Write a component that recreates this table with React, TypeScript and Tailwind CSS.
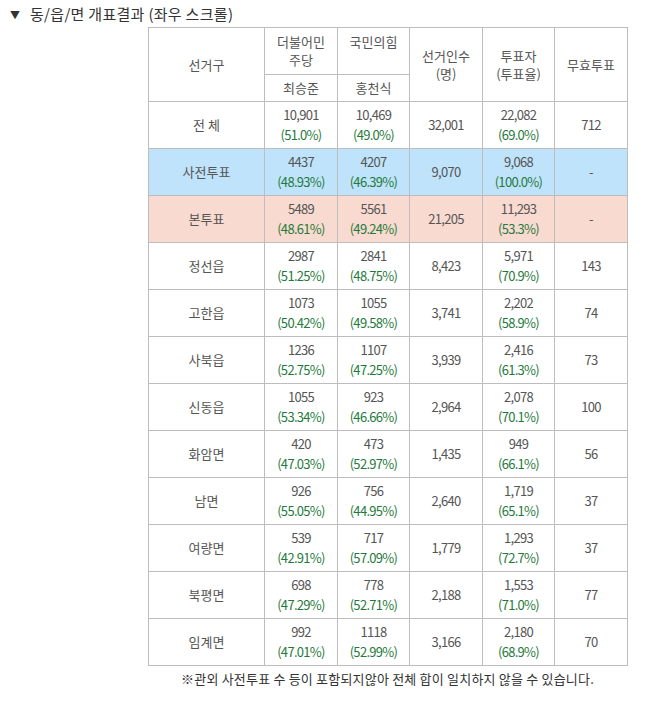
import React from 'react';

interface Row {
  name: string;
  a: string;
  ap: string;
  b: string;
  bp: string;
  voters: string;
  turnout: string;
  tp: string;
  invalid: string;
  bg?: string;
}

const rows: Row[] = [
  { name: '전 체', a: '10,901', ap: '(51.0%)', b: '10,469', bp: '(49.0%)', voters: '32,001', turnout: '22,082', tp: '(69.0%)', invalid: '712' },
  { name: '사전투표', a: '4437', ap: '(48.93%)', b: '4207', bp: '(46.39%)', voters: '9,070', turnout: '9,068', tp: '(100.0%)', invalid: '-', bg: 'bg-[#bfe3fb]' },
  { name: '본투표', a: '5489', ap: '(48.61%)', b: '5561', bp: '(49.24%)', voters: '21,205', turnout: '11,293', tp: '(53.3%)', invalid: '-', bg: 'bg-[#f9dad0]' },
  { name: '정선읍', a: '2987', ap: '(51.25%)', b: '2841', bp: '(48.75%)', voters: '8,423', turnout: '5,971', tp: '(70.9%)', invalid: '143' },
  { name: '고한읍', a: '1073', ap: '(50.42%)', b: '1055', bp: '(49.58%)', voters: '3,741', turnout: '2,202', tp: '(58.9%)', invalid: '74' },
  { name: '사북읍', a: '1236', ap: '(52.75%)', b: '1107', bp: '(47.25%)', voters: '3,939', turnout: '2,416', tp: '(61.3%)', invalid: '73' },
  { name: '신동읍', a: '1055', ap: '(53.34%)', b: '923', bp: '(46.66%)', voters: '2,964', turnout: '2,078', tp: '(70.1%)', invalid: '100' },
  { name: '화암면', a: '420', ap: '(47.03%)', b: '473', bp: '(52.97%)', voters: '1,435', turnout: '949', tp: '(66.1%)', invalid: '56' },
  { name: '남면', a: '926', ap: '(55.05%)', b: '756', bp: '(44.95%)', voters: '2,640', turnout: '1,719', tp: '(65.1%)', invalid: '37' },
  { name: '여량면', a: '539', ap: '(42.91%)', b: '717', bp: '(57.09%)', voters: '1,779', turnout: '1,293', tp: '(72.7%)', invalid: '37' },
  { name: '북평면', a: '698', ap: '(47.29%)', b: '778', bp: '(52.71%)', voters: '2,188', turnout: '1,553', tp: '(71.0%)', invalid: '77' },
  { name: '임계면', a: '992', ap: '(47.01%)', b: '1118', bp: '(52.99%)', voters: '3,166', turnout: '2,180', tp: '(68.9%)', invalid: '70' },
];

const cell = 'border border-[#bdbdbd] text-center align-middle p-0';
const num = 'tracking-[-0.7px]';

const Pair = ({ n, p }: { n: string; p: string }) => (
  <div className={`flex flex-col leading-[20px] ${num}`}>
    <span>{n}</span>
    <span className="text-[#1f7a3c]">{p}</span>
  </div>
);

export default function App() {
  return (
    <div
      className="w-[657px] h-[708px] bg-white text-[#555] pt-[3px]"
      style={{ fontFamily: '"Noto Sans CJK KR", "Noto Sans", sans-serif' }}
    >
      <div className="flex items-center gap-[10px] pl-[10px] h-[22px] text-[15px] text-[#333]">
        <span className="text-[10px]">▼</span>
        <span className="tracking-[0.3px]">동/읍/면 개표결과 (좌우 스크롤)</span>
      </div>

      <div className="pl-[148px] pt-[2px] w-[627px]">
        <table className="w-[479px] table-fixed border-collapse text-[13px]">
          <colgroup>
            <col className="w-[116px]" />
            <col className="w-[73px]" />
            <col className="w-[72px]" />
            <col className="w-[73px]" />
            <col className="w-[72px]" />
            <col className="w-[73px]" />
          </colgroup>
          <thead>
            <tr className="h-[47px]">
              <th rowSpan={2} className={`${cell} font-normal`}>선거구</th>
              <th className={`${cell} font-normal leading-[18px]`}>더불어민<br />주당</th>
              <th className={`${cell} font-normal leading-[18px]`}>국민의힘<br /><span className="invisible">.</span></th>
              <th rowSpan={2} className={`${cell} font-normal leading-[18px]`}>선거인수<br />(명)</th>
              <th rowSpan={2} className={`${cell} font-normal leading-[18px]`}>투표자<br />(투표율)</th>
              <th rowSpan={2} className={`${cell} font-normal`}>무효투표</th>
            </tr>
            <tr className="h-[27px]">
              <th className={`${cell} font-normal`}>최승준</th>
              <th className={`${cell} font-normal`}>홍천식</th>
            </tr>
          </thead>
          <tbody>
            {rows.map(r => (
              <tr key={r.name} className={`h-[47px] ${r.bg ?? ''}`}>
                <td className={cell}>{r.name}</td>
                <td className={cell}><Pair n={r.a} p={r.ap} /></td>
                <td className={cell}><Pair n={r.b} p={r.bp} /></td>
                <td className={`${cell} ${num}`}>{r.voters}</td>
                <td className={cell}><Pair n={r.turnout} p={r.tp} /></td>
                <td className={`${cell} ${num}`}>{r.invalid}</td>
              </tr>
            ))}
          </tbody>
        </table>
        <p className="w-[479px] text-center text-[13px] tracking-[0.2px] text-[#333] mt-[3px]">
          ※관외 사전투표 수 등이 포함되지않아 전체 합이 일치하지 않을 수 있습니다.
        </p>
      </div>
    </div>
  );
}
